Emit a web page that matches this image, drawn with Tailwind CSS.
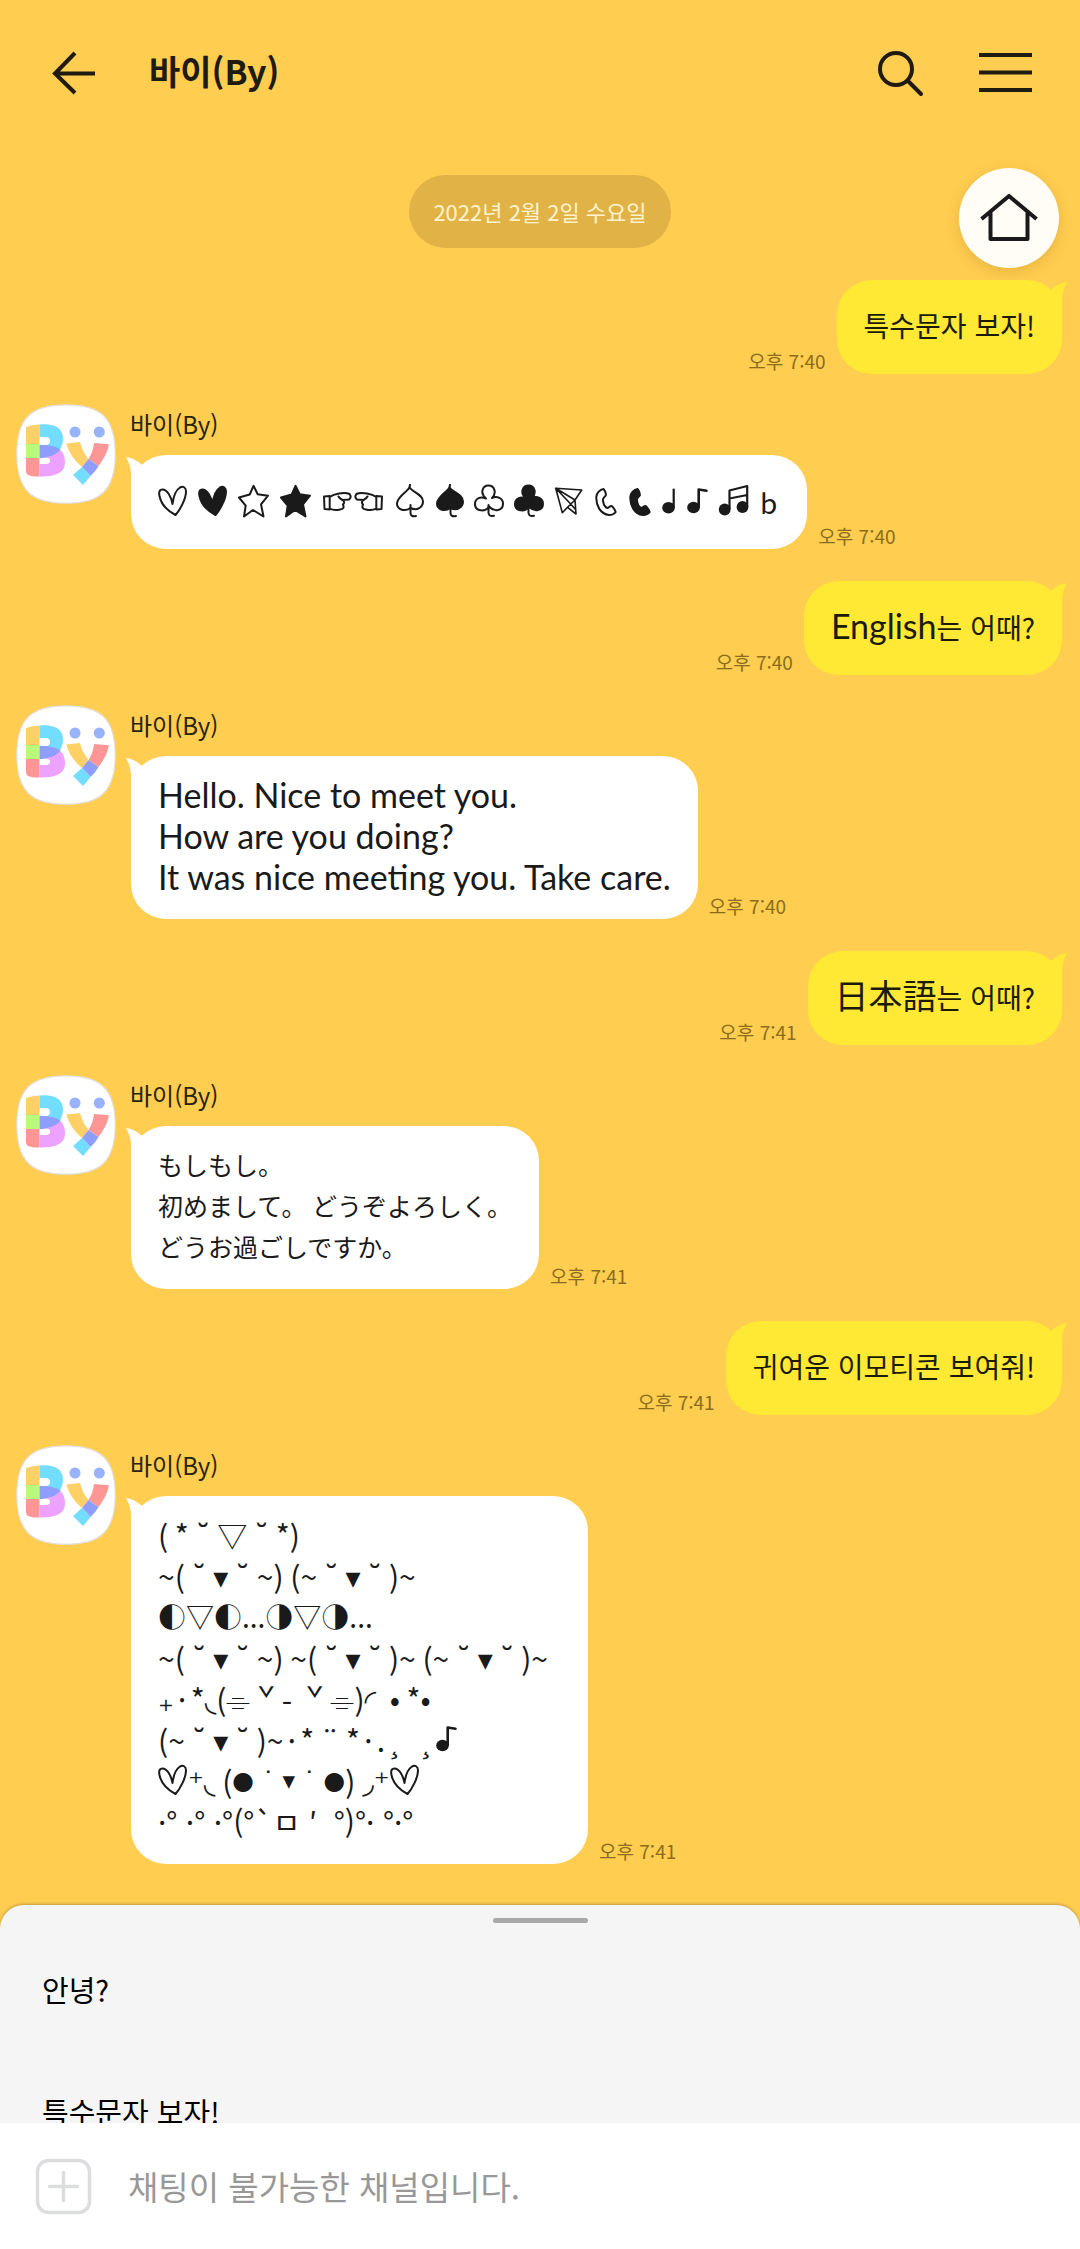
<!DOCTYPE html>
<html lang="ko">
  <head>
    <meta charset="UTF-8" />
    <meta name="viewport" content="width=device-width, initial-scale=1.0" />
    <title>바이(By)</title>
    <script src="https://cdn.jsdelivr.net/npm/@tailwindcss/browser@4"></script>
  </head>
  <body class="flex min-h-screen flex-col bg-[#ffcd50] font-['Noto_Sans_CJK_KR','DejaVu_Sans',sans-serif] text-[#1a1a1a]">
    <!-- shared shapes -->
    <svg class="hidden" aria-hidden="true">
      <symbol id="avatar" viewBox="0 0 100 100">
        <path d="M50 .8C84 .8 99.2 13 99.2 50S84 99.2 50 99.2.8 87 .8 50 16 .8 50 .8Z" fill="#fff" stroke="#e2dfda" stroke-width="1.2" />
        <path d="M10 23Q16 20.500 23.500 20.500V40H10Z" fill="#ffd065" />
        <path d="M10 40H23.500V54H10Z" fill="#b9fb78" />
        <path d="M10 54H23.500V72.500Q17 73 12 71Q10 70 10 66Z" fill="#ff9696" />
        <path d="M23.500 20.500C38 19 47 24 47 34C47 40 45 43 44 46L37 42L23.500 41H30C35.500 41 35.500 33 30 33H23.500Z" fill="#73ddff" />
        <path d="M23.500 41C33 40.500 41 42 44.500 46C40 52 32 54 23.500 54Z" fill="#8e9eff" />
        <path d="M44.500 46C47.500 49 49 53 49 58C49 68 42 72.500 23.500 72.500V60H30C35.500 60 35.500 53.500 30 53.500H27C34 53 40 51 44.500 46Z" fill="#eda2ff" />
        <circle cx="59" cy="28" r="5.500" fill="#98b2fb" />
        <circle cx="83.300" cy="28" r="5.500" fill="#98b2fb" />
        <path d="M50.300 39.500L64 38Q66 47 72.500 55L66 63Q54 53 50.300 39.500Z" fill="#ffd065" />
        <path d="M78 39L93 40.300Q91 51 82.500 62L72.500 55Q77 48 78 39Z" fill="#ff9696" />
        <path d="M72.500 55L82.500 62Q80 67 74.500 72L66 63Z" fill="#8e9eff" />
        <path d="M66 63L74.500 72Q71 76.500 67 81L57 71Z" fill="#73ddff" />
      </symbol>
      <symbol id="tail" viewBox="0 0 20 34">
        <path d="M0 0C7 1 12 4 16 8L20 34H5V18C5 11 3 5 0 0Z" fill="currentColor" />
      </symbol>
      <symbol id="heart" viewBox="0 0 30 36">
        <path d="M14.500 20C13 12 9 5.500 4.500 5.500C1 5.500.8 9 1.500 12C3 20 10 27 17.500 31C22 26 28 15 28 7.500C28 3 25 2 22 3.500C18 6 15.500 12 14.500 20Z" stroke="currentColor" stroke-width="2" stroke-linejoin="round" />
      </symbol>
      <symbol id="star" viewBox="0 0 32 36">
        <path d="M15.500 1.800L19.700 10.300L30 11.700L23 20.300L25.500 32.500L15 26L6 32.500L7.700 21.700L1 13.500L11.700 10.500Z" stroke="currentColor" stroke-width="2" stroke-linejoin="round" />
      </symbol>
      <symbol id="hand" viewBox="0 0 30 36">
        <path d="M2 12.500L7.700 12V25.500L2.500 25ZM7.700 13Q11 10.500 17 9.500Q24 8.300 27.500 10Q30 13 27 15.500L20.500 16Q17.500 14.500 16.500 12.500M20.500 16Q23.500 18 21 20.500Q23 25 18 25.500Q12 27 7.700 24.500" fill="none" stroke="currentColor" stroke-width="2" stroke-linejoin="round" stroke-linecap="round" />
      </symbol>
      <symbol id="spade" viewBox="0 0 30 36">
        <path d="M15.500 3.500C13 8 3 13 3 19.500C3 25 10 28.500 16.500 24C23 27.500 29 23 29 17.500C29 10.500 19 8.500 15.500 3.500Z" stroke="currentColor" stroke-width="2" stroke-linejoin="round" />
        <path d="M15.500 3.500L16 .8M16.500 21V29Q16.500 33 22 32" fill="none" stroke="currentColor" stroke-width="2" stroke-linecap="round" />
      </symbol>
      <symbol id="club" viewBox="0 0 30 36">
        <path d="M12 14.500C5.500 9 8.500 1.500 14.500 1.500S23 9 18 14C23 11.500 29 14.500 29 19.500C29 27 20 28.500 15 22.500C12 28 1 28 1 20C1 14 7 12 12 14.500Z" stroke="currentColor" stroke-width="2" stroke-linejoin="round" />
        <path d="M14.500 21V29Q15 33 20 31.700" fill="none" stroke="currentColor" stroke-width="2" stroke-linecap="round" />
      </symbol>
      <symbol id="plane" viewBox="0 0 30 36">
        <path d="M1.700 4.300L27.700 6L21 16L22 30L13.500 23.300L8.300 28.700ZM1.700 4.300L21 16M1.700 4.300L16.700 20L22 26M13.500 23.300L21 16" fill="none" stroke="currentColor" stroke-width="1.600" stroke-linejoin="round" />
      </symbol>
      <symbol id="phone" viewBox="0 0 24 36">
        <path d="M9.500 5C11 6.500 12 9 12 11C11 13.500 8.500 13 9 16.500C9.500 20.500 11.500 23.500 13.500 24C15.500 23.500 16 21.500 17.700 22C19 23 21 26 21.700 28C20 30.500 17.500 31 15 31C6 30 2 21 2.300 13C2.500 9 6 5.500 9.500 5Z" stroke="currentColor" stroke-width="2" stroke-linejoin="round" />
      </symbol>
      <symbol id="quarter" viewBox="0 0 14 36">
        <ellipse cx="6.500" cy="23.700" rx="6.300" ry="5.800" fill="currentColor" />
        <path d="M11.700 5.500V23" stroke="currentColor" stroke-width="2.200" stroke-linecap="round" />
      </symbol>
      <symbol id="eighth" viewBox="0 0 22 36">
        <ellipse cx="7.500" cy="23.500" rx="6.300" ry="5.800" fill="currentColor" />
        <path d="M12.700 23V5.500L20.500 6.800" fill="none" stroke="currentColor" stroke-width="2.600" stroke-linecap="round" stroke-linejoin="round" />
      </symbol>
      <symbol id="beamed" viewBox="0 0 32 36">
        <circle cx="6.700" cy="25.500" r="5.900" fill="currentColor" />
        <circle cx="24.500" cy="23" r="5.900" fill="currentColor" />
        <path d="M11.500 25V6.500L29.200 2V23M11.500 14.500L29.200 11" fill="none" stroke="currentColor" stroke-width="2.200" stroke-linejoin="round" />
      </symbol>
    </svg>

    <header class="flex h-[146px] shrink-0 items-center pl-[52px] pr-[46px]">
      <button type="button" aria-label="뒤로" class="shrink-0">
        <svg class="size-11" viewBox="0 0 44 44" fill="none" stroke="#1f1b10" stroke-width="4">
          <path d="M43 22.500H4M23 2L3 22.500L23 42" />
        </svg>
      </button>
      <h1 class="ml-[53px] flex-1 pb-1 text-[34px] font-bold leading-[48px] text-[#1f1b10]">바이(By)</h1>
      <button type="button" aria-label="검색" class="mr-[54px] shrink-0">
        <svg class="size-12" viewBox="0 0 48 48" fill="none" stroke="#1f1b10" stroke-width="4" stroke-linecap="round">
          <circle cx="20" cy="20" r="16" />
          <path d="M32 32L45 45" />
        </svg>
      </button>
      <button type="button" aria-label="메뉴" class="shrink-0">
        <svg class="h-10 w-14" viewBox="0 0 56 40" stroke="#1f1b10" stroke-width="4">
          <path d="M1 2H54M1 19.500H54M1 37H54" />
        </svg>
      </button>
    </header>

    <main class="relative flex flex-1 flex-col px-[18px] pt-[29px]">
      <button type="button" aria-label="채널 홈" class="absolute right-[21px] top-[22px] flex size-[100px] items-center justify-center rounded-full bg-[#fffdf5] shadow-[0_4px_14px_rgba(120,80,0,0.18)]">
        <svg class="h-12 w-[58px]" viewBox="0 0 58 48" fill="none" stroke="#1a1a1a" stroke-width="4" stroke-linejoin="round">
          <path d="M1.500 25L29 2L56.500 25M10.500 18V45H47.500V18" />
        </svg>
      </button>

      <p class="self-center rounded-full bg-[#e1b347] px-6 text-[22px] leading-[73px] text-[#fff3cf]">2022년 2월 2일 수요일</p>

      <div class="mt-8 flex items-end justify-end gap-[11px]">
        <time class="text-[19px] leading-[27px] text-[#8a6d1c]">오후 7:40</time>
        <div class="relative flex min-h-[94px] items-center rounded-[35px] bg-[#ffe934] px-[27px] pb-[22px] pt-[18px] text-[#1c1a08]">
          <svg class="absolute -right-[5px] top-0.5 h-[34px] w-5 -scale-x-100 text-[#ffe934]"><use href="#tail" /></svg>
          <p class="relative text-[28px] leading-[41px]">특수문자 보자!</p>
        </div>
      </div>

      <div class="mt-[30px] flex gap-[14px] -ml-0.5">
        <svg class="size-[100px] shrink-0" role="img" aria-label="By"><use href="#avatar" /></svg>
        <div>
          <p class="mb-[11px] text-[24px] leading-[40px] text-[#2a2210]">바이(By)</p>
          <div class="flex items-end gap-[11px]">
            <div class="relative ml-px flex min-h-[94px] items-center rounded-[35px] bg-white pl-[27px] pr-[30px] py-5">
              <svg class="absolute -left-[5px] top-0.5 h-[34px] w-5 text-white"><use href="#tail" /></svg>
              <div class="relative flex items-center gap-[10px] text-[28px] leading-[41px]">
                <svg class="h-9 w-[30px]" fill="none" role="img" aria-label="♡"><use href="#heart" /></svg>
                <svg class="h-9 w-[30px]" fill="currentColor" role="img" aria-label="♥"><use href="#heart" /></svg>
                <svg class="h-9 w-8" fill="none" role="img" aria-label="☆"><use href="#star" /></svg>
                <svg class="h-9 w-8" fill="currentColor" role="img" aria-label="★"><use href="#star" /></svg>
                <div class="flex gap-0.5">
                  <svg class="h-9 w-[30px]" role="img" aria-label="☞"><use href="#hand" /></svg>
                  <svg class="h-9 w-[30px] -scale-x-100" role="img" aria-label="☜"><use href="#hand" /></svg>
                </div>
                <svg class="h-9 w-[30px]" fill="none" role="img" aria-label="♤"><use href="#spade" /></svg>
                <svg class="h-9 w-[30px]" fill="currentColor" role="img" aria-label="♠"><use href="#spade" /></svg>
                <svg class="h-9 w-[30px]" fill="none" role="img" aria-label="♧"><use href="#club" /></svg>
                <svg class="h-9 w-[30px]" fill="currentColor" role="img" aria-label="♣"><use href="#club" /></svg>
                <svg class="h-9 w-[30px]" role="img" aria-label="종이비행기"><use href="#plane" /></svg>
                <svg class="h-9 w-6" fill="none" role="img" aria-label="☏"><use href="#phone" /></svg>
                <svg class="h-9 w-6" fill="currentColor" role="img" aria-label="☎"><use href="#phone" /></svg>
                <svg class="h-9 w-[14px]" role="img" aria-label="♩"><use href="#quarter" /></svg>
                <svg class="h-9 w-[22px]" role="img" aria-label="♪"><use href="#eighth" /></svg>
                <svg class="h-9 w-8" role="img" aria-label="♬"><use href="#beamed" /></svg>
                <span>b</span>
              </div>
            </div>
            <time class="text-[19px] leading-[27px] text-[#8a6d1c]">오후 7:40</time>
          </div>
        </div>
      </div>

      <div class="mt-8 flex items-end justify-end gap-[11px]">
        <time class="text-[19px] leading-[27px] text-[#8a6d1c]">오후 7:40</time>
        <div class="relative flex min-h-[94px] items-center rounded-[35px] bg-[#ffe934] px-[27px] pb-[22px] pt-[18px] text-[#1c1a08]">
          <svg class="absolute -right-[5px] top-0.5 h-[34px] w-5 -scale-x-100 text-[#ffe934]"><use href="#tail" /></svg>
          <p class="relative text-[28px] leading-[41px]"><span class="font-['Lato',sans-serif] text-[34px]" lang="en">English</span>는 어때?</p>
        </div>
      </div>

      <div class="mt-[30px] flex gap-[14px] -ml-0.5">
        <svg class="size-[100px] shrink-0" role="img" aria-label="By"><use href="#avatar" /></svg>
        <div>
          <p class="mb-[11px] text-[24px] leading-[40px] text-[#2a2210]">바이(By)</p>
          <div class="flex items-end gap-[11px]">
            <div class="relative ml-px flex min-h-[94px] items-center rounded-[35px] bg-white px-[27px] pb-[22px] pt-[18px]">
              <svg class="absolute -left-[5px] top-0.5 h-[34px] w-5 text-white"><use href="#tail" /></svg>
              <p class="relative font-['Lato',sans-serif] text-[34px] leading-[41px]" lang="en">Hello. Nice to meet you.<br />How are you doing?<br />It was nice meeting you. Take care.</p>
            </div>
            <time class="text-[19px] leading-[27px] text-[#8a6d1c]">오후 7:40</time>
          </div>
        </div>
      </div>

      <div class="mt-8 flex items-end justify-end gap-[11px]">
        <time class="text-[19px] leading-[27px] text-[#8a6d1c]">오후 7:41</time>
        <div class="relative flex min-h-[94px] items-center rounded-[35px] bg-[#ffe934] px-[27px] pb-[22px] pt-[18px] text-[#1c1a08]">
          <svg class="absolute -right-[5px] top-0.5 h-[34px] w-5 -scale-x-100 text-[#ffe934]"><use href="#tail" /></svg>
          <p class="relative text-[28px] leading-[41px]"><span class="font-['Noto_Sans_CJK_JP',sans-serif] text-[34px]" lang="ja">日本語</span>는 어때?</p>
        </div>
      </div>

      <div class="mt-[30px] flex gap-[14px] -ml-0.5">
        <svg class="size-[100px] shrink-0" role="img" aria-label="By"><use href="#avatar" /></svg>
        <div>
          <p class="mb-[11px] text-[24px] leading-[40px] text-[#2a2210]">바이(By)</p>
          <div class="flex items-end gap-[11px]">
            <div class="relative ml-px flex min-h-[94px] items-center rounded-[35px] bg-white px-[27px] pb-[22px] pt-[18px]">
              <svg class="absolute -left-[5px] top-0.5 h-[34px] w-5 text-white"><use href="#tail" /></svg>
              <p class="relative font-['Noto_Sans_CJK_JP',sans-serif] text-[25px] leading-[41px]" lang="ja">もしもし。<br />初めまして。 どうぞよろしく。<br />どうお過ごしですか。</p>
            </div>
            <time class="text-[19px] leading-[27px] text-[#8a6d1c]">오후 7:41</time>
          </div>
        </div>
      </div>

      <div class="mt-8 flex items-end justify-end gap-[11px]">
        <time class="text-[19px] leading-[27px] text-[#8a6d1c]">오후 7:41</time>
        <div class="relative flex min-h-[94px] items-center rounded-[35px] bg-[#ffe934] px-[27px] pb-[22px] pt-[18px] text-[#1c1a08]">
          <svg class="absolute -right-[5px] top-0.5 h-[34px] w-5 -scale-x-100 text-[#ffe934]"><use href="#tail" /></svg>
          <p class="relative text-[28px] leading-[41px]">귀여운 이모티콘 보여줘!</p>
        </div>
      </div>

      <div class="mt-[30px] flex gap-[14px] -ml-0.5">
        <svg class="size-[100px] shrink-0" role="img" aria-label="By"><use href="#avatar" /></svg>
        <div>
          <p class="mb-[11px] text-[24px] leading-[40px] text-[#2a2210]">바이(By)</p>
          <div class="flex items-end gap-[11px]">
            <div class="relative ml-px flex min-h-[94px] items-center rounded-[35px] bg-white pl-[27px] pr-10 pb-[22px] pt-[18px]">
              <svg class="absolute -left-[5px] top-0.5 h-[34px] w-5 text-white"><use href="#tail" /></svg>
              <div class="relative text-[30px] *:flex *:h-[41px] *:items-center *:whitespace-pre *:leading-[41px]">
                <p>( * ˘ ▽ ˘ *)</p>
                <p>~( ˘ ▾ ˘ ~) (~ ˘ ▾ ˘ )~</p>
                <p class="text-[28px]">◐▽◐...◑▽◑...</p>
                <p>~( ˘ ▾ ˘ ~) ~( ˘ ▾ ˘ )~ (~ ˘ ▾ ˘ )~</p>
                <p>₊·*◟(⌯ ˇ -  ˇ ⌯)◜  • *•</p>
                <p>(~ ˘ ▾ ˘ )~·* ¨ *·.¸  ¸<svg class="h-9 w-[22px]" role="img" aria-label="♪"><use href="#eighth" /></svg></p>
                <p><svg class="h-9 w-[30px]" fill="none" role="img" aria-label="♡"><use href="#heart" /></svg>⁺◟ (<span class="font-['DejaVu_Sans',sans-serif] text-[25px]">● ˙ ▾ ˙ ●</span>) ◞⁺<svg class="h-9 w-[30px]" fill="none" role="img" aria-label="♡"><use href="#heart" /></svg></p>
                <p>·° ·° ·°(°`ㅁ ′  °)°· °·°</p>
              </div>
            </div>
            <time class="text-[19px] leading-[27px] text-[#8a6d1c]">오후 7:41</time>
          </div>
        </div>
      </div>
    </main>

    <section aria-label="추천 메시지" class="h-[218px] shrink-0 overflow-hidden rounded-t-3xl bg-[#f5f5f5] shadow-[0_-1px_3px_rgba(0,0,0,0.25)]">
      <div class="mx-auto mt-[13px] h-[5px] w-[95px] rounded-full bg-[#a9a9a9]"></div>
      <div class="mt-1.5 flex flex-col">
        <button type="button" class="h-[122px] px-[42px] text-left text-[29px] text-black">안녕?</button>
        <button type="button" class="h-[122px] px-[42px] text-left text-[29px] text-black">특수문자 보자!</button>
      </div>
    </section>

    <footer class="flex h-[126px] shrink-0 items-center gap-9 bg-white px-[35px]">
      <button type="button" aria-label="첨부" class="shrink-0">
        <svg class="size-[57px]" viewBox="0 0 57 57" fill="none" stroke="#dcdddf" stroke-width="3.500" stroke-linecap="round">
          <rect x="2.500" y="2.500" width="52" height="52" rx="11" />
          <path d="M28.500 14.500V42.500M14.500 28.500H42.500" />
        </svg>
      </button>
      <input type="text" disabled aria-label="메시지" placeholder="채팅이 불가능한 채널입니다." class="min-w-0 flex-1 bg-transparent text-[33px] leading-[48px] placeholder:text-[#989898]" />
    </footer>
  </body>
</html>
